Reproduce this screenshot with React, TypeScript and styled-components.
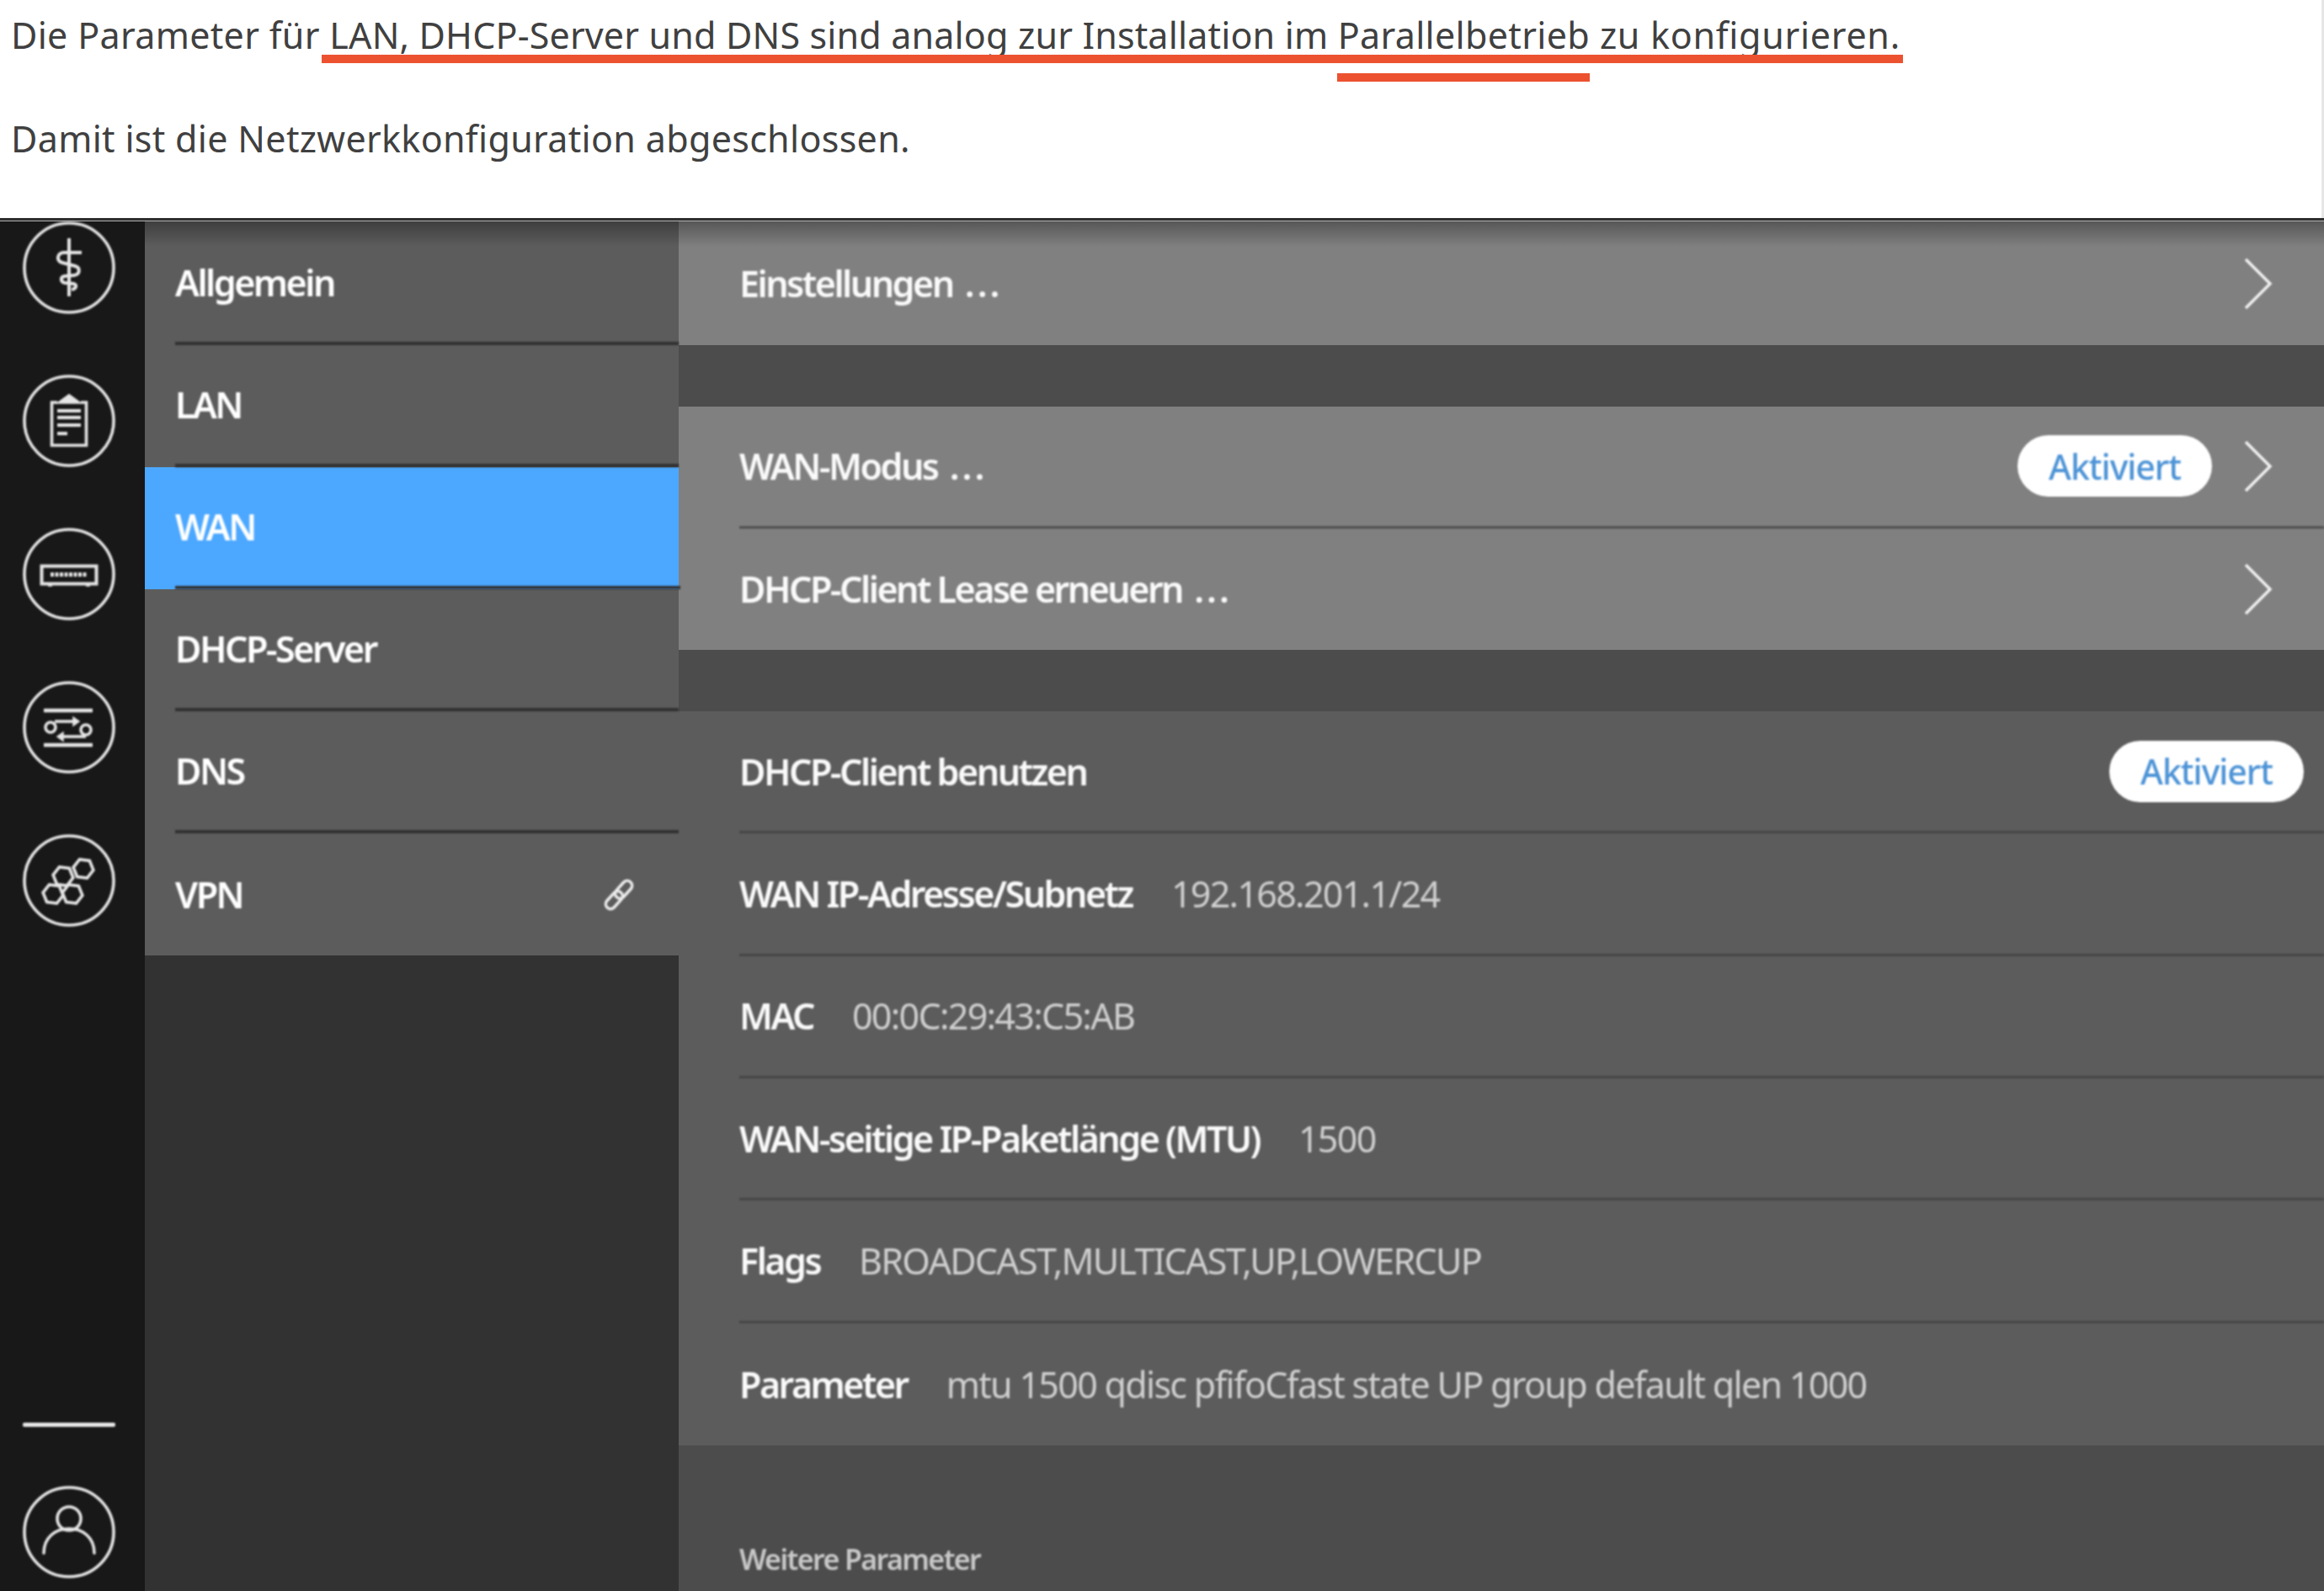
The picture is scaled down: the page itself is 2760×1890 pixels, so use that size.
import React from "react";
import styled, { createGlobalStyle, css } from "styled-components";

const Global = createGlobalStyle`
  html, body { margin: 0; padding: 0; background: #fff; }
  #root { width: 2760px; height: 1890px; overflow: hidden; }
  * { box-sizing: border-box; }
`;

const soft = css`
  filter: blur(0.8px);
`;

const Page = styled.div`
  width: 2760px;
  height: 1890px;
  display: flex;
  flex-direction: column;
  overflow: hidden;
`;

const Doc = styled.header`
  height: 259px;
  flex: none;
  background: #fff;
  border-right: 3px solid #e6e6e6;
  padding: 13px 0 0 13px;
  font-family: "Noto Sans", sans-serif;
  font-size: 43px;
  color: #404040;
  letter-spacing: 0.32px;
`;

const Para = styled.p`
  margin: 0 0 65px;
  line-height: 58px;
  white-space: nowrap;
`;

const Marked = styled.span`
  position: relative;
  letter-spacing: 0.17px;
  &::after {
    content: "";
    position: absolute;
    left: -9px;
    right: -3px;
    top: 53px;
    height: 10px;
    background: #ec5230;
  }
`;

const MarkedWord = styled.span`
  position: relative;
  letter-spacing: 0.32px;
  &::after {
    content: "";
    position: absolute;
    left: -1px;
    right: 0;
    top: 75px;
    height: 10px;
    background: #ec5230;
  }
`;

const MarkedTail = styled.span`
  letter-spacing: 0.72px;
`;

const Rule = styled.div`
  flex: none;
  height: 4px;
  background: #2e2e2e;
  border-bottom: 1px solid #b0b0b0;
`;

const Screen = styled.main`
  position: relative;
  flex: 1;
  display: flex;
  min-height: 0;
  background: #323232;
  font-family: "Noto Sans", sans-serif;
  &::before {
    content: "";
    position: absolute;
    inset: 0 0 auto 0;
    height: 30px;
    background: linear-gradient(rgba(0, 0, 0, 0.32), rgba(0, 0, 0, 0));
    z-index: 2;
  }
`;

const Rail = styled.aside`
  flex: none;
  width: 172px;
  background: #181818;
  display: flex;
  flex-direction: column;
  align-items: center;
  padding-right: 8px;
  position: relative;
  z-index: 3;
`;

const RailIcons = styled.div`
  display: flex;
  flex-direction: column;
  gap: 72px;
`;

const RailDivider = styled.div`
  ${soft}
  width: 110px;
  height: 5px;
  border-radius: 2px;
  background: #e8e8e8;
  margin-top: 589px;
  margin-bottom: 70px;
`;

const RailSvg = styled.svg`
  ${soft}
  display: block;
  width: 110px;
  height: 110px;
  fill: none;
  stroke: #e6e6e6;
  stroke-width: 3.6;
`;

const Nav = styled.nav`
  flex: none;
  width: 634px;
  height: 872px;
  padding-top: 2px;
  background: #5c5c5c;
  display: grid;
  grid-template-rows: repeat(6, 1fr);
`;

const NavItem = styled.div<{ $active?: boolean }>`
  padding-left: 36px;
  background: ${(p) => (p.$active ? "#4ca8ff" : "transparent")};
  margin-right: ${(p) => (p.$active ? "-2px" : "0")};
`;

const NavInner = styled.div<{ $last?: boolean }>`
  ${soft}
  height: 100%;
  display: flex;
  align-items: center;
  justify-content: space-between;
  padding-right: 50px;
  border-bottom: ${(p) => (p.$last ? "none" : "4px solid #323232")};
  color: #fff;
  font-size: 43px;
  font-weight: 600;
  letter-spacing: -2.5px;
`;

const LinkSvg = styled.svg`
  width: 42px;
  height: 42px;
  fill: none;
  stroke: #ececec;
  stroke-width: 3.4;
`;

const Content = styled.section`
  flex: 1;
  min-width: 0;
  background: #4c4c4c;
  display: flex;
  flex-direction: column;
`;

const Group = styled.div<{ $tone: string; $h: number; $gap?: number }>`
  flex: none;
  height: ${(p) => p.$h}px;
  margin-bottom: ${(p) => p.$gap ?? 0}px;
  background: ${(p) => p.$tone};
  display: grid;
  grid-auto-rows: 1fr;
  padding-left: 72px;
`;

const Row = styled.div<{ $line?: string }>`
  ${soft}
  display: flex;
  align-items: center;
  gap: 46px;
  border-bottom: ${(p) => (p.$line ? `3px solid ${p.$line}` : "none")};
  padding-right: 24px;
  min-width: 0;
`;

const Label = styled.span`
  color: #fafafa;
  font-size: 43px;
  font-weight: 600;
  letter-spacing: -2.5px;
  white-space: nowrap;
`;

const Dots = styled.span`
  letter-spacing: 3px;
`;

const Value = styled.span`
  color: #cfcfcf;
  font-size: 43px;
  font-weight: 400;
  letter-spacing: -1.7px;
  white-space: nowrap;
`;

const Trail = styled.div`
  margin-left: auto;
  display: flex;
  align-items: center;
  gap: 38px;
`;

const ChevronSlot = styled.div`
  margin-right: 37px;
`;

const Pill = styled.span`
  width: 231px;
  height: 73px;
  border-radius: 37px;
  background: #fff;
  color: #4c93d6;
  display: flex;
  align-items: center;
  justify-content: center;
  font-size: 41px;
  font-weight: 500;
  letter-spacing: -1px;
`;

const ChevronSvg = styled.svg`
  display: block;
  width: 34px;
  height: 62px;
  fill: none;
  stroke: #f2f2f2;
  stroke-width: 3.4;
`;

const Footnote = styled.div`
  ${soft}
  padding: 112px 0 0 72px;
  color: #c8c8c8;
  font-size: 34px;
  font-weight: 600;
  letter-spacing: -1.6px;
`;

const Chevron = () => (
  <ChevronSlot>
    <ChevronSvg viewBox="0 0 34 62">
      <path d="M2 2 L31 31 L2 60" />
    </ChevronSvg>
  </ChevronSlot>
);

const Rail1 = () => (
  <RailSvg viewBox="0 0 110 110">
    <circle cx="55" cy="55" r="53" />
    <path d="M55 20 V89" strokeWidth="4" />
    <path d="M70 37 H49 C41 37 39 47 47 49 L62 53 C69 55 68 63 61 64 L50 65 C44 66 45 72 50 73 L60 74 C65 75 64 80 58 81" strokeWidth="4" />
  </RailSvg>
);

const Rail2 = () => (
  <RailSvg viewBox="0 0 110 110">
    <circle cx="55" cy="55" r="53" />
    <path d="M41 33 H34.5 V84 H75.5 V33 H69" />
    <path d="M44 33 L55 25 L66 33 Z" fill="#e6e6e6" />
    <path d="M41 43 H69 M41 51 H69 M41 60 H69 M41 70 H53" strokeWidth="4" />
  </RailSvg>
);

const Rail3 = () => (
  <RailSvg viewBox="0 0 110 110">
    <circle cx="55" cy="55" r="53" />
    <rect x="22.5" y="45.5" width="65" height="21" strokeWidth="4" />
    <path d="M33 55.5 H77" strokeWidth="5" strokeDasharray="4 1.5" />
    <path d="M30 68 h5 M75 68 h5" strokeWidth="3.6" />
  </RailSvg>
);

const Rail4 = () => (
  <RailSvg viewBox="0 0 110 110">
    <circle cx="55" cy="55" r="53" />
    <path d="M25 35 H83 M25 76 H83" strokeWidth="4.5" />
    <circle cx="33" cy="55" r="6" />
    <circle cx="75" cy="58" r="6" />
    <path d="M38 48 H63" />
    <path d="M60 43 L67 48 L60 53 Z" fill="#e6e6e6" strokeWidth="1.5" />
    <path d="M75 66 H45" />
    <path d="M48 61 L41 66 L48 71 Z" fill="#e6e6e6" strokeWidth="1.5" />
  </RailSvg>
);

const hex = (cx: number, cy: number, r: number) =>
  [0, 60, 120, 180, 240, 300]
    .map((a) => {
      const t = ((a + 8) * Math.PI) / 180;
      return `${(cx + r * Math.cos(t)).toFixed(1)},${(cy + r * Math.sin(t)).toFixed(1)}`;
    })
    .join(" ");

const Rail5 = () => (
  <RailSvg viewBox="0 0 110 110">
    <circle cx="55" cy="55" r="53" />
    <polygon points={hex(72, 41, 12)} />
    <polygon points={hex(48, 50, 12)} />
    <polygon points={hex(36, 71, 12)} />
    <polygon points={hex(59, 71, 12)} />
  </RailSvg>
);

const RailUser = () => (
  <RailSvg viewBox="0 0 110 110">
    <circle cx="55" cy="55" r="53" />
    <circle cx="55" cy="39" r="14" />
    <path d="M25 80 C25 62 38 51 55 51 C72 51 85 62 85 80" strokeLinecap="round" />
  </RailSvg>
);

const LinkIcon = () => (
  <LinkSvg viewBox="0 0 40 40">
    <g transform="rotate(-48 20 20)">
      <rect x="0.5" y="14.5" width="23" height="11" rx="5.5" />
      <rect x="16.5" y="14.5" width="23" height="11" rx="5.5" />
    </g>
  </LinkSvg>
);

const navItems = ["Allgemein", "LAN", "WAN", "DHCP-Server", "DNS", "VPN"];

const details: [string, string][] = [
  ["WAN IP-Adresse/Subnetz", "192.168.201.1/24"],
  ["MAC", "00:0C:29:43:C5:AB"],
  ["WAN-seitige IP-Paketlänge (MTU)", "1500"],
  ["Flags", "BROADCAST,MULTICAST,UP,LOWERCUP"],
  ["Parameter", "mtu 1500 qdisc pfifoCfast state UP group default qlen 1000"],
];

export default function App() {
  return (
    <Page>
      <Global />
      <Doc>
        <Para>
          Die Parameter für{" "}
          <Marked>
            LAN, DHCP-Server und DNS sind analog zur Installation im{" "}
            <MarkedWord>Parallelbetrieb</MarkedWord>
            <MarkedTail> zu konfigurieren.</MarkedTail>
          </Marked>
        </Para>
        <Para>Damit ist die Netzwerkkonfiguration abgeschlossen.</Para>
      </Doc>
      <Rule />
      <Screen>
        <Rail>
          <RailIcons>
            <Rail1 />
            <Rail2 />
            <Rail3 />
            <Rail4 />
            <Rail5 />
          </RailIcons>
          <RailDivider />
          <RailUser />
        </Rail>
        <Nav>
          {navItems.map((n, i) => (
            <NavItem key={n} $active={n === "WAN"}>
              <NavInner $last={i === navItems.length - 1}>
                {n}
                {n === "VPN" && <LinkIcon />}
              </NavInner>
            </NavItem>
          ))}
        </Nav>
        <Content>
          <Group $tone="#808080" $h={147} $gap={73}>
            <Row>
              <Label>
                Einstellungen<Dots> ...</Dots>
              </Label>
              <Trail>
                <Chevron />
              </Trail>
            </Row>
          </Group>
          <Group $tone="#808080" $h={289} $gap={73}>
            <Row $line="#505050">
              <Label>
                WAN-Modus<Dots> ...</Dots>
              </Label>
              <Trail>
                <Pill>Aktiviert</Pill>
                <Chevron />
              </Trail>
            </Row>
            <Row>
              <Label>
                DHCP-Client Lease erneuern<Dots> ...</Dots>
              </Label>
              <Trail>
                <Chevron />
              </Trail>
            </Row>
          </Group>
          <Group $tone="#5c5c5c" $h={872}>
            <Row $line="#474747">
              <Label>DHCP-Client benutzen</Label>
              <Trail>
                <Pill>Aktiviert</Pill>
              </Trail>
            </Row>
            {details.map(([k, v], i) => (
              <Row key={k} $line={i < details.length - 1 ? "#474747" : undefined}>
                <Label>{k}</Label>
                <Value>{v}</Value>
              </Row>
            ))}
          </Group>
          <Footnote>Weitere Parameter</Footnote>
        </Content>
      </Screen>
    </Page>
  );
}
